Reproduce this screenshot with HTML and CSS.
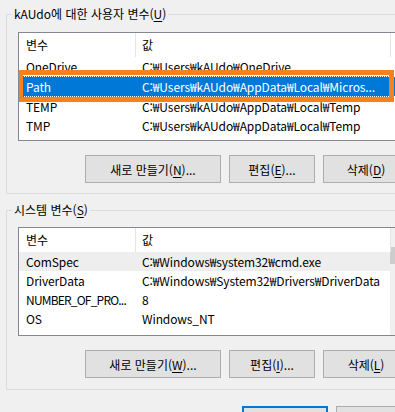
FILE: index.html
```html
<!DOCTYPE html>
<html lang="ko">
<head>
    <meta charset="UTF-8">
    <title>환경 변수</title>
    <link rel="stylesheet" href="styles.css">
</head>
<body>
<div class="dialog">

    <!-- 사용자 변수 -->
    <fieldset class="group">
        <legend>kAUdo에 대한 사용자 변수(<u>U</u>)</legend>
        <div class="list">
            <div class="list-body">
                <div class="row head"><div class="cell">변수</div><div class="cell">값</div></div>
                <div class="row"><div class="cell">OneDrive</div><div class="cell">C:₩Users₩kAUdo₩OneDrive</div></div>
                <div class="row selected">
                    <div class="cell">Path</div><div class="cell">C:₩Users₩kAUdo₩AppData₩Local₩Micros...</div>
                    <span class="mark"></span>
                </div>
                <div class="row"><div class="cell">TEMP</div><div class="cell">C:₩Users₩kAUdo₩AppData₩Local₩Temp</div></div>
                <div class="row"><div class="cell">TMP</div><div class="cell">C:₩Users₩kAUdo₩AppData₩Local₩Temp</div></div>
            </div>
        </div>
        <div class="buttons">
            <button class="btn wide">새로 만들기(<u>N</u>)...</button>
            <button class="btn">편집(<u>E</u>)...</button>
            <button class="btn">삭제(<u>D</u>)</button>
        </div>
    </fieldset>

    <!-- 시스템 변수 -->
    <fieldset class="group system">
        <legend>시스템 변수(<u>S</u>)</legend>
        <div class="list">
            <div class="list-body">
                <div class="row head"><div class="cell">변수</div><div class="cell">값</div></div>
                <div class="row hover"><div class="cell">ComSpec</div><div class="cell">C:₩Windows₩system32₩cmd.exe</div></div>
                <div class="row"><div class="cell">DriverData</div><div class="cell">C:₩Windows₩System32₩Drivers₩DriverData</div></div>
                <div class="row"><div class="cell tight">NUMBER_OF_PRO...</div><div class="cell">8</div></div>
                <div class="row"><div class="cell">OS</div><div class="cell">Windows_NT</div></div>
            </div>
            <div class="scrollbar"><div class="thumb"></div></div>
        </div>
        <div class="buttons">
            <button class="btn wide">새로 만들기(<u>W</u>)...</button>
            <button class="btn">편집(<u>I</u>)...</button>
            <button class="btn">삭제(<u>L</u>)</button>
        </div>
    </fieldset>

    <!-- 확인 / 취소 (아래쪽이 잘려 보임) -->
    <div class="dialog-buttons">
        <button class="btn default"></button>
        <button class="btn"></button>
    </div>
</div>
</body>
</html>
```

FILE: styles.css
```css
body {
    margin: 0;
    background-color: #f0f0f0;
    font-family: "Noto Sans CJK KR", "Noto Sans", sans-serif;
    font-size: 12px;
    color: #000;
    overflow: hidden;
}

.dialog {
    width: 420px;
    padding: 6px 0 0 6px;
}

u {
    text-decoration-thickness: 1px;
    text-underline-offset: 2px;
}

/* Group box */
.group {
    margin: 0;
    min-width: 0;
    border: 1px solid #dcdcdc;
    padding: 10px 0 10px 11px;
}

.group legend {
    margin-left: -6px;
    padding: 0 2px;
    line-height: 16px;
}

.group.system {
    margin-top: 8px;
    padding-top: 9px;
    padding-bottom: 11px;
}

/* List view */
.list {
    width: 390px;
    height: 109px;
    box-sizing: border-box;
    border: 1px solid #828790;
    background: #fff;
    display: flex;
    overflow: hidden;
}

.list-body {
    flex: 1;
    min-width: 0;
    letter-spacing: -0.1px;
}

.row {
    display: grid;
    grid-template-columns: 117px 255px 1fr;
    height: 19px;
    line-height: 19px;
    white-space: nowrap;
    position: relative;
}

.cell {
    overflow: hidden;
    padding-left: 7px;
}

.cell + .cell {
    padding-left: 6px;
}

.cell.tight {
    letter-spacing: -0.8px;
}

.row.head {
    height: 24px;
    line-height: 24px;
}

.row.head .cell {
    border-right: 1px solid #e5e5e5;
}

.row.hover {
    background: #eeeeee;
}

.row.selected {
    height: 21px;
    line-height: 21px;
    background: #0078d7;
    color: #fff;
    outline: 1px dotted #fff;
    outline-offset: -1px;
}

/* orange annotation box over the selected row */
.mark {
    position: absolute;
    top: -6px;
    bottom: -5px;
    left: -1px;
    right: 13px;
    border: 5px solid #f58220;
}

.scrollbar {
    width: 17px;
    background: #f0f0f0;
    padding-top: 19px;
}

.thumb {
    height: 17px;
    background: #cdcdcd;
}

/* Buttons */
.buttons {
    display: flex;
    gap: 8px;
    margin: 14px 0 0 67px;
}

.btn {
    width: 86px;
    height: 28px;
    padding: 0;
    flex-shrink: 0;
    background: #e1e1e1;
    border: 1px solid #adadad;
    font-family: inherit;
    font-size: 12px;
    color: #000;
}

.btn.wide {
    width: 136px;
}

.dialog-buttons {
    display: flex;
    gap: 8px;
    margin: 16px 0 0 236px;
}

.btn.default {
    border: 2px solid #0078d7;
}
```
